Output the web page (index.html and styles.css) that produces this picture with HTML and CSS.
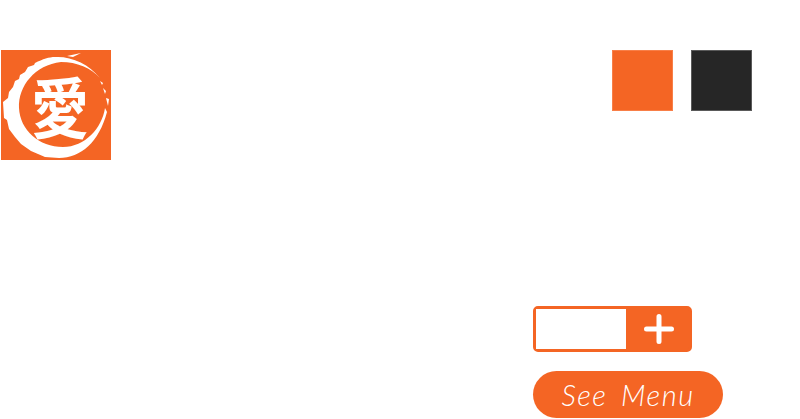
FILE: index.html
```html
<!DOCTYPE html>
<html lang="en">
<head>
<meta charset="utf-8">
<title>Assets</title>
<link rel="stylesheet" href="styles.css">
</head>
<body>
<div class="top">
  <svg class="logo" viewBox="0 0 110 110" width="110" height="110" aria-label="Logo">
    <rect class="logo-bg" width="110" height="110"/>
    <path class="ink" d="M99 28 C88 14 70 6 54 7 C48 7 42 9 34 13 L33 15 L27 17 L24 22 L19 25 L18 29 L14 31 L12 37 L8 42 L7 48 L2 52 L3 68 L6 70 L8 79 L14 87 L20 94 L30 101 L44 107 L58 108 C80 108 98 92 106 62 L104 58 C101 78 84 97 62 97 C38 97 19 80 18 58 C17 36 34 15 60 12 C76 12 90 18 99 28 Z"/>
    <path class="ink" d="M66 6 L80 3 L72 7 Z M102 38 L105 41 L104 44 Z M105 48 L108 49 L107 56 Z M99 31 L102 33 L101 35 Z"/>
    <text class="kanji" x="59" y="54">愛</text>
  </svg>
  <div class="swatches">
    <div class="swatch swatch-orange"></div>
    <div class="swatch swatch-dark"></div>
  </div>
</div>
<div class="controls">
  <div class="stepper">
    <div class="stepper-field"></div>
    <div class="stepper-add">
      <svg viewBox="0 0 30 30" width="30" height="30" aria-label="Add"><path class="plus" d="M15 2.5V27.5M2.5 15H27.5"/></svg>
    </div>
  </div>
  <a class="menu-btn" href="#">See Menu</a>
</div>
</body>
</html>
```
FILE: styles.css
```css
html, body { margin: 0; padding: 0; background: #fff; }
body { width: 800px; height: 419px; overflow: hidden; }
.top {
  display: flex;
  justify-content: space-between;
  align-items: flex-start;
  padding: 50px 48px 0 1px;
}
.logo { display: block; }
.logo-bg { fill: #f46524; }
.ink { fill: #fff; }
.kanji {
  fill: #fff;
  font-family: "Noto Sans CJK JP", sans-serif;
  font-weight: 700;
  font-size: 58px;
  text-anchor: middle;
  dominant-baseline: central;
  transform-box: fill-box;
  transform-origin: center;
  transform: scaleY(1.14);
}
.swatches { display: flex; gap: 18px; }
.swatch { width: 61px; height: 61px; box-sizing: border-box; }
.swatch-orange { background: #f46524; border: 1px solid #f87f48; }
.swatch-dark { background: #262626; border: 1px solid #5a5a5a; }
.controls {
  display: flex;
  flex-direction: column;
  align-items: flex-start;
  gap: 19px;
  margin: 146px 0 0 533px;
}
.stepper {
  display: flex;
  width: 159px;
  height: 46px;
  box-sizing: border-box;
  border: 3px solid #f46524;
  border-radius: 5px;
  background: #f46524;
}
.stepper-field { width: 90px; background: #fff; }
.stepper-add { flex: 1; display: flex; align-items: center; justify-content: center; padding-left: 3px; }
.stepper-add svg { display: block; }
.plus { fill: none; stroke: #fff; stroke-width: 5; stroke-linecap: round; }
.menu-btn {
  display: flex;
  align-items: center;
  justify-content: center;
  width: 190px;
  height: 47px;
  border-radius: 24px;
  background: #f46524;
  color: #fff;
  font-family: "Lato", sans-serif;
  font-weight: 300;
  font-style: italic;
  font-size: 29px;
  letter-spacing: 1.5px;
  word-spacing: 5px;
  text-decoration: none;
}
```
